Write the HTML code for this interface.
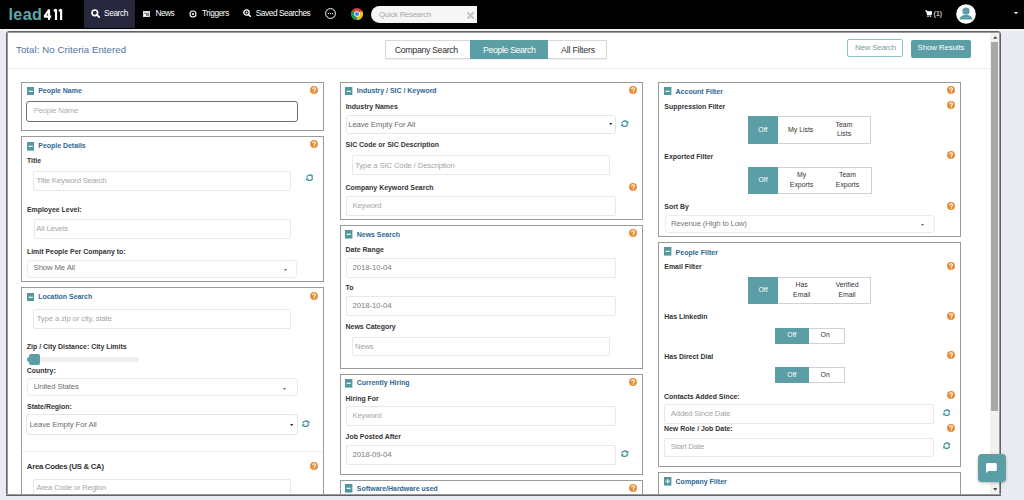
<!DOCTYPE html>
<html><head><meta charset="utf-8"><style>
html,body{margin:0;padding:0;}
body{width:1024px;height:500px;overflow:hidden;position:relative;background:#e8ebf0;font-family:"Liberation Sans", sans-serif;}
</style></head><body>
<div style="position:absolute;left:0.00px;top:0.00px;width:1024.00px;height:28.50px;background:#000;"></div>
<div style="position:absolute;left:0.00px;top:28.50px;width:1024.00px;height:2.50px;background:#f3f4f6;"></div>
<div style="position:absolute;left:8.40px;top:5.99px;font-size:16.2px;line-height:16.2px;color:#5aa9ad;font-weight:bold;white-space:nowrap;letter-spacing:0.4px">lead</div>
<svg style="position:absolute;left:40.00px;top:6.00px" width="26" height="16" viewBox="0 0 26 16"><g fill="none" stroke="#fff" stroke-width="2.2" stroke-linejoin="bevel"><path d="M8.9 4.0 L4.4 10.6 H11.2"/><path d="M9.0 3.4 V13.9"/><path d="M13.8 5.0 L16.0 3.6 V13.9"/><path d="M18.9 5.0 L21.1 3.6 V13.9"/></g></svg>
<div style="position:absolute;left:84.00px;top:0.00px;width:51.20px;height:28.00px;background:#26263c;"></div>
<svg style="position:absolute;left:91.00px;top:9.00px" width="9" height="9" viewBox="0 0 9 9"><circle cx="3.8" cy="3.8" r="2.8" fill="none" stroke="#fff" stroke-width="1.6"/><line x1="5.9" y1="5.9" x2="8.2" y2="8.2" stroke="#fff" stroke-width="1.8" stroke-linecap="round"/></svg>
<div style="position:absolute;left:104.00px;top:9.47px;font-size:8.3px;line-height:8.3px;color:#fff;white-space:nowrap;letter-spacing:-0.383px;">Search</div>
<svg style="position:absolute;left:143.00px;top:10.50px" width="7" height="6" viewBox="0 0 7 6"><rect x="0" y="0" width="7" height="6" fill="#ddd"/><rect x="1" y="2" width="5" height="3" fill="#888"/><rect x="1" y="3" width="2" height="2" fill="#fff"/></svg>
<div style="position:absolute;left:155.50px;top:9.47px;font-size:8.3px;line-height:8.3px;color:#fff;white-space:nowrap;letter-spacing:-0.563px;">News</div>
<svg style="position:absolute;left:189.00px;top:10.00px" width="8" height="8" viewBox="0 0 8 8"><circle cx="4" cy="4" r="3" fill="none" stroke="#fff" stroke-width="1.1"/><circle cx="4" cy="4" r="1.1" fill="#fff"/></svg>
<div style="position:absolute;left:202.00px;top:9.47px;font-size:8.3px;line-height:8.3px;color:#fff;white-space:nowrap;letter-spacing:-0.390px;">Triggers</div>
<svg style="position:absolute;left:243.00px;top:9.30px" width="8" height="8" viewBox="0 0 8 8"><circle cx="3.5" cy="3.5" r="2.7" fill="none" stroke="#fff" stroke-width="1.3"/><circle cx="3.5" cy="3.5" r="1" fill="#fff"/><line x1="5.5" y1="5.5" x2="7.5" y2="7.5" stroke="#fff" stroke-width="1.5" stroke-linecap="round"/></svg>
<div style="position:absolute;left:255.80px;top:9.47px;font-size:8.3px;line-height:8.3px;color:#fff;white-space:nowrap;letter-spacing:-0.456px;">Saved Searches</div>
<svg style="position:absolute;left:324.90px;top:8.20px" width="11" height="11" viewBox="0 0 11 11"><circle cx="5.5" cy="5.5" r="4.9" fill="none" stroke="#fff" stroke-width="1"/><circle cx="3.4" cy="5.6" r="0.7" fill="#fff"/><circle cx="5.5" cy="5.6" r="0.7" fill="#fff"/><circle cx="7.6" cy="5.6" r="0.7" fill="#fff"/></svg>
<svg style="position:absolute;left:350.80px;top:7.90px" width="12" height="12" viewBox="0 0 12 12"><circle cx="6" cy="6" r="6" fill="#db4437"/><path d="M6 6 L0.8 3 A6 6 0 0 0 6 12 Z" fill="#0f9d58"/><path d="M6 6 L11.2 3 A6 6 0 0 1 6 12 Z" fill="#f4c20d"/><circle cx="6" cy="6" r="2.8" fill="#fff"/><circle cx="6" cy="6" r="2.1" fill="#4285f4"/></svg>
<div style="position:absolute;left:370.60px;top:6.00px;width:106.00px;height:17.00px;background:#f6f6f6;border-radius:8.5px 0 0 8.5px;"></div>
<div style="position:absolute;left:379.00px;top:10.60px;font-size:7.8px;line-height:7.8px;color:#a9a9b0;white-space:nowrap;letter-spacing:-0.244px;">Quick Research</div>
<svg style="position:absolute;left:467.00px;top:11.70px" width="7" height="7" viewBox="0 0 7 7"><path d="M1 1 L6 6 M6 1 L1 6" stroke="#c4c4c4" stroke-width="1.8" stroke-linecap="round"/></svg>
<svg style="position:absolute;left:924.50px;top:10.00px" width="7" height="7" viewBox="0 0 7 7"><path d="M0.3 0.8 H1.6 L2.6 4.6 H6 L6.8 1.8 H2" fill="none" stroke="#fff" stroke-width="1.2"/><path d="M1.8 1.8 H6.6 L5.9 4.3 H2.5 Z" fill="#fff"/><circle cx="3" cy="6.2" r="0.8" fill="#fff"/><circle cx="5.5" cy="6.2" r="0.8" fill="#fff"/></svg>
<div style="position:absolute;left:933.60px;top:10.37px;font-size:7.6px;line-height:7.6px;color:#fff;white-space:nowrap;letter-spacing:-0.428px;">(1)</div>
<svg style="position:absolute;left:956.30px;top:4.00px" width="20" height="20" viewBox="0 0 20 20"><circle cx="10" cy="10" r="9.8" fill="#fff"/><circle cx="10" cy="7.2" r="3.6" fill="#5b9ea6"/><path d="M3.6 15.6 C3.8 12.2 6.3 11 10 11 C13.7 11 16.2 12.2 16.4 15.6 Z" fill="#5b9ea6"/></svg>
<svg style="position:absolute;left:1013.80px;top:12.40px" width="4" height="2.5" viewBox="0 0 4 2.5"><path d="M0 0 H4 L2 2.2 Z" fill="#fff"/></svg>
<div style="position:absolute;left:6.00px;top:31.00px;width:995.00px;height:464.60px;background:#fff;border:1px solid #636363;box-shadow:inset 0 0 0 1px #9a9a9a;border-radius:3px;box-sizing:border-box;"></div>
<div style="position:absolute;left:990.40px;top:33.00px;width:8.60px;height:460.60px;background:#f1f1f1;"></div>
<svg style="position:absolute;left:992.70px;top:36.20px" width="4.5" height="3" viewBox="0 0 4.5 3"><path d="M0 2.8 L2.25 0 L4.5 2.8 Z" fill="#505050"/></svg>
<div style="position:absolute;left:991.20px;top:42.00px;width:6.80px;height:368.80px;background:#a8a8a8;"></div>
<svg style="position:absolute;left:992.70px;top:488.00px" width="4.5" height="3" viewBox="0 0 4.5 3"><path d="M0 0 L2.25 2.8 L4.5 0 Z" fill="#505050"/></svg>
<div style="position:absolute;left:16.00px;top:44.67px;font-size:9.6px;line-height:9.6px;color:#4d72a0;white-space:nowrap;letter-spacing:0.095px;">Total: No Criteria Entered</div>
<div style="position:absolute;left:385.20px;top:40.20px;width:221.40px;height:18.80px;border:1px solid #d9d9d9;box-sizing:border-box;background:#fff;box-shadow:0 1px 1px rgba(0,0,0,0.06);"></div>
<div style="position:absolute;left:470.20px;top:40.20px;width:77.80px;height:18.80px;background:#5b9ea6;"></div>
<div style="position:absolute;left:394.80px;top:46.07px;font-size:8.9px;line-height:8.9px;color:#333;white-space:nowrap;letter-spacing:-0.397px;">Company Search</div>
<div style="position:absolute;left:483.10px;top:46.07px;font-size:8.9px;line-height:8.9px;color:#fff;white-space:nowrap;letter-spacing:-0.439px;">People Search</div>
<div style="position:absolute;left:561.00px;top:46.07px;font-size:8.9px;line-height:8.9px;color:#333;white-space:nowrap;letter-spacing:-0.228px;">All Filters</div>
<div style="position:absolute;left:847.10px;top:39.30px;width:55.80px;height:18.20px;border:1px solid #8ec3c7;border-radius:2px;box-sizing:border-box;"></div>
<div style="position:absolute;left:855.00px;top:44.41px;font-size:7.9px;line-height:7.9px;color:#7a9ea2;white-space:nowrap;letter-spacing:-0.202px;">New Search</div>
<div style="position:absolute;left:910.70px;top:39.50px;width:60.80px;height:18.00px;background:#5b9ea6;border-radius:2px;"></div>
<div style="position:absolute;left:917.50px;top:44.41px;font-size:7.9px;line-height:7.9px;color:#fff;white-space:nowrap;letter-spacing:-0.117px;">Show Results</div>
<div style="position:absolute;left:8.00px;top:68.00px;width:982.40px;height:1.00px;background:#f0f0f0;"></div>
<div style="position:absolute;left:21.00px;top:82.00px;width:303.20px;height:49.20px;border:1px solid #9a9a9a;box-sizing:border-box;"></div>
<svg style="position:absolute;left:26.80px;top:86.80px" width="7.4" height="8.6" viewBox="0 0 7.4 8.6"><rect width="7.4" height="8.6" fill="#52999f"/><rect x="1.6" y="3.7" width="4.2" height="1.3" fill="#e9f3f4"/></svg>
<div style="position:absolute;left:38.20px;top:88.12px;font-size:6.95px;line-height:6.95px;color:#2f6792;font-weight:bold;white-space:nowrap;">People Name</div>
<svg style="position:absolute;left:309.70px;top:85.80px" width="8" height="8" viewBox="0 0 16 16"><circle cx="8" cy="8" r="7.9" fill="#e58e38"/><path d="M5.4 6.3 C5.4 4.5 6.6 3.4 8.2 3.4 C9.8 3.4 10.9 4.4 10.9 5.9 C10.9 7.7 8.7 7.9 8.7 9.9" fill="none" stroke="#fff" stroke-width="2.2"/><rect x="7.5" y="11" width="2.3" height="2.2" fill="#fff"/></svg>
<div style="position:absolute;left:26.40px;top:101.00px;width:271.40px;height:21.00px;border:1px solid #6e6e6e;border-radius:3px;box-sizing:border-box;"></div>
<div style="position:absolute;left:33.80px;top:107.30px;font-size:7.8px;line-height:7.8px;color:#b0b0b0;white-space:nowrap;letter-spacing:-0.275px;">People Name</div>
<div style="position:absolute;left:21.00px;top:136.40px;width:303.20px;height:145.60px;border:1px solid #9a9a9a;box-sizing:border-box;"></div>
<svg style="position:absolute;left:26.80px;top:142.00px" width="7.4" height="8.6" viewBox="0 0 7.4 8.6"><rect width="7.4" height="8.6" fill="#52999f"/><rect x="1.6" y="3.7" width="4.2" height="1.3" fill="#e9f3f4"/></svg>
<div style="position:absolute;left:38.30px;top:143.22px;font-size:6.95px;line-height:6.95px;color:#2f6792;font-weight:bold;white-space:nowrap;">People Details</div>
<svg style="position:absolute;left:309.70px;top:140.30px" width="8" height="8" viewBox="0 0 16 16"><circle cx="8" cy="8" r="7.9" fill="#e58e38"/><path d="M5.4 6.3 C5.4 4.5 6.6 3.4 8.2 3.4 C9.8 3.4 10.9 4.4 10.9 5.9 C10.9 7.7 8.7 7.9 8.7 9.9" fill="none" stroke="#fff" stroke-width="2.2"/><rect x="7.5" y="11" width="2.3" height="2.2" fill="#fff"/></svg>
<div style="position:absolute;left:27.00px;top:158.02px;font-size:6.95px;line-height:6.95px;color:#333;font-weight:bold;white-space:nowrap;">Title</div>
<div style="position:absolute;left:33.30px;top:171.20px;width:257.60px;height:19.40px;border:1px solid #e8e8e8;border-radius:2px;box-sizing:border-box;"></div>
<div style="position:absolute;left:36.40px;top:177.20px;font-size:7.8px;line-height:7.8px;color:#a6a6a6;white-space:nowrap;letter-spacing:-0.189px;">Title Keyword Search</div>
<svg style="position:absolute;left:305.75px;top:173.85px" width="7.5" height="7.5" viewBox="0 0 16 16"><path d="M1.8 7.0 A6.4 5.6 0 0 1 13.4 4.6" fill="none" stroke="#3b929e" stroke-width="2.8"/><path d="M15.8 1.4 L15.8 7.2 L10.0 7.2 Z" fill="#3b929e"/><path d="M14.2 9.0 A6.4 5.6 0 0 1 2.6 11.4" fill="none" stroke="#3b929e" stroke-width="2.8"/><path d="M0.2 14.6 L0.2 8.8 L6.0 8.8 Z" fill="#3b929e"/></svg>
<div style="position:absolute;left:26.90px;top:206.62px;font-size:6.95px;line-height:6.95px;color:#333;font-weight:bold;white-space:nowrap;">Employee Level:</div>
<div style="position:absolute;left:33.60px;top:219.30px;width:257.30px;height:19.70px;border:1px solid #e8e8e8;border-radius:2px;box-sizing:border-box;"></div>
<div style="position:absolute;left:36.30px;top:225.40px;font-size:7.8px;line-height:7.8px;color:#a6a6a6;white-space:nowrap;letter-spacing:-0.171px;">All Levels</div>
<div style="position:absolute;left:26.90px;top:249.02px;font-size:6.95px;line-height:6.95px;color:#333;font-weight:bold;white-space:nowrap;">Limit People Per Company to:</div>
<div style="position:absolute;left:26.90px;top:259.50px;width:270.10px;height:18.10px;border:1px solid #ececec;border-radius:3px;box-sizing:border-box;"></div>
<div style="position:absolute;left:33.60px;top:264.40px;font-size:7.8px;line-height:7.8px;color:#6e6e6e;white-space:nowrap;letter-spacing:-0.150px;">Show Me All</div>
<svg style="position:absolute;left:283.70px;top:269.20px" width="3" height="2.2" viewBox="0 0 3 2.2"><path d="M0 0 H3 L1.5 2.1 Z" fill="#666"/></svg>
<div style="position:absolute;left:21.00px;top:287.40px;width:303.20px;height:233.20px;border:1px solid #9a9a9a;box-sizing:border-box;"></div>
<svg style="position:absolute;left:26.80px;top:292.60px" width="7.4" height="8.6" viewBox="0 0 7.4 8.6"><rect width="7.4" height="8.6" fill="#52999f"/><rect x="1.6" y="3.7" width="4.2" height="1.3" fill="#e9f3f4"/></svg>
<div style="position:absolute;left:38.20px;top:293.82px;font-size:6.95px;line-height:6.95px;color:#2f6792;font-weight:bold;white-space:nowrap;">Location Search</div>
<svg style="position:absolute;left:309.70px;top:291.50px" width="8" height="8" viewBox="0 0 16 16"><circle cx="8" cy="8" r="7.9" fill="#e58e38"/><path d="M5.4 6.3 C5.4 4.5 6.6 3.4 8.2 3.4 C9.8 3.4 10.9 4.4 10.9 5.9 C10.9 7.7 8.7 7.9 8.7 9.9" fill="none" stroke="#fff" stroke-width="2.2"/><rect x="7.5" y="11" width="2.3" height="2.2" fill="#fff"/></svg>
<div style="position:absolute;left:33.30px;top:309.30px;width:257.80px;height:19.80px;border:1px solid #e8e8e8;border-radius:2px;box-sizing:border-box;"></div>
<div style="position:absolute;left:36.70px;top:315.30px;font-size:7.8px;line-height:7.8px;color:#a6a6a6;white-space:nowrap;letter-spacing:-0.162px;">Type a zip or city, state</div>
<div style="position:absolute;left:26.80px;top:344.22px;font-size:6.95px;line-height:6.95px;color:#333;font-weight:bold;white-space:nowrap;">Zip / City Distance: City Limits</div>
<div style="position:absolute;left:26.80px;top:357.10px;width:112.20px;height:5.20px;background:#efefef;border-radius:2.5px;"></div>
<div style="position:absolute;left:26.80px;top:357.10px;width:3.20px;height:5.20px;background:#5b9ea6;border-radius:2.5px 0 0 2.5px;"></div>
<div style="position:absolute;left:28.50px;top:354.40px;width:11.30px;height:10.70px;background:#5b9ea6;border-radius:2px;"></div>
<div style="position:absolute;left:26.80px;top:367.92px;font-size:6.95px;line-height:6.95px;color:#333;font-weight:bold;white-space:nowrap;">Country:</div>
<div style="position:absolute;left:27.10px;top:378.30px;width:270.50px;height:17.90px;border:1px solid #ececec;border-radius:3px;box-sizing:border-box;"></div>
<div style="position:absolute;left:33.70px;top:383.40px;font-size:7.8px;line-height:7.8px;color:#6e6e6e;white-space:nowrap;letter-spacing:-0.139px;">United States</div>
<svg style="position:absolute;left:283.30px;top:387.50px" width="3" height="2.2" viewBox="0 0 3 2.2"><path d="M0 0 H3 L1.5 2.1 Z" fill="#666"/></svg>
<div style="position:absolute;left:27.00px;top:404.22px;font-size:6.95px;line-height:6.95px;color:#333;font-weight:bold;white-space:nowrap;">State/Region:</div>
<div style="position:absolute;left:26.40px;top:414.40px;width:271.20px;height:20.60px;border:1px solid #e6e6e6;border-radius:3px;box-sizing:border-box;"></div>
<div style="position:absolute;left:29.60px;top:421.20px;font-size:7.8px;line-height:7.8px;color:#6e6e6e;white-space:nowrap;letter-spacing:-0.141px;">Leave Empty For All</div>
<svg style="position:absolute;left:289.90px;top:423.60px" width="3.4" height="2.2" viewBox="0 0 3.4 2.2"><path d="M0 0 H3.4 L1.7 2.1 Z" fill="#333"/></svg>
<svg style="position:absolute;left:302.25px;top:419.75px" width="7.5" height="7.5" viewBox="0 0 16 16"><path d="M1.8 7.0 A6.4 5.6 0 0 1 13.4 4.6" fill="none" stroke="#3b929e" stroke-width="2.8"/><path d="M15.8 1.4 L15.8 7.2 L10.0 7.2 Z" fill="#3b929e"/><path d="M14.2 9.0 A6.4 5.6 0 0 1 2.6 11.4" fill="none" stroke="#3b929e" stroke-width="2.8"/><path d="M0.2 14.6 L0.2 8.8 L6.0 8.8 Z" fill="#3b929e"/></svg>
<div style="position:absolute;left:22.00px;top:451.00px;width:300.60px;height:1.00px;background:#eeeeee;"></div>
<div style="position:absolute;left:26.80px;top:463.20px;font-size:7.8px;line-height:7.8px;color:#333;font-weight:bold;white-space:nowrap;letter-spacing:-0.292px;">Area Codes (US &amp; CA)</div>
<svg style="position:absolute;left:309.50px;top:462.20px" width="8" height="8" viewBox="0 0 16 16"><circle cx="8" cy="8" r="7.9" fill="#e58e38"/><path d="M5.4 6.3 C5.4 4.5 6.6 3.4 8.2 3.4 C9.8 3.4 10.9 4.4 10.9 5.9 C10.9 7.7 8.7 7.9 8.7 9.9" fill="none" stroke="#fff" stroke-width="2.2"/><rect x="7.5" y="11" width="2.3" height="2.2" fill="#fff"/></svg>
<div style="position:absolute;left:33.30px;top:478.50px;width:257.80px;height:22.10px;border:1px solid #e8e8e8;border-radius:2px;box-sizing:border-box;"></div>
<div style="position:absolute;left:36.40px;top:484.20px;font-size:7.8px;line-height:7.8px;color:#a6a6a6;white-space:nowrap;letter-spacing:-0.198px;">Area Code or Region</div>
<div style="position:absolute;left:339.60px;top:82.00px;width:303.00px;height:138.20px;border:1px solid #9a9a9a;box-sizing:border-box;"></div>
<svg style="position:absolute;left:345.40px;top:86.80px" width="7.4" height="8.6" viewBox="0 0 7.4 8.6"><rect width="7.4" height="8.6" fill="#52999f"/><rect x="1.6" y="3.7" width="4.2" height="1.3" fill="#e9f3f4"/></svg>
<div style="position:absolute;left:356.80px;top:88.32px;font-size:6.95px;line-height:6.95px;color:#2f6792;font-weight:bold;white-space:nowrap;">Industry / SIC / Keyword</div>
<svg style="position:absolute;left:628.50px;top:85.80px" width="8" height="8" viewBox="0 0 16 16"><circle cx="8" cy="8" r="7.9" fill="#e58e38"/><path d="M5.4 6.3 C5.4 4.5 6.6 3.4 8.2 3.4 C9.8 3.4 10.9 4.4 10.9 5.9 C10.9 7.7 8.7 7.9 8.7 9.9" fill="none" stroke="#fff" stroke-width="2.2"/><rect x="7.5" y="11" width="2.3" height="2.2" fill="#fff"/></svg>
<div style="position:absolute;left:345.70px;top:104.02px;font-size:6.95px;line-height:6.95px;color:#333;font-weight:bold;white-space:nowrap;">Industry Names</div>
<div style="position:absolute;left:345.50px;top:114.80px;width:270.40px;height:19.60px;border:1px solid #e6e6e6;border-radius:3px;box-sizing:border-box;"></div>
<div style="position:absolute;left:348.20px;top:120.80px;font-size:7.8px;line-height:7.8px;color:#6e6e6e;white-space:nowrap;letter-spacing:-0.141px;">Leave Empty For All</div>
<svg style="position:absolute;left:608.90px;top:123.40px" width="3.4" height="2.2" viewBox="0 0 3.4 2.2"><path d="M0 0 H3.4 L1.7 2.1 Z" fill="#333"/></svg>
<svg style="position:absolute;left:621.15px;top:119.65px" width="7.5" height="7.5" viewBox="0 0 16 16"><path d="M1.8 7.0 A6.4 5.6 0 0 1 13.4 4.6" fill="none" stroke="#3b929e" stroke-width="2.8"/><path d="M15.8 1.4 L15.8 7.2 L10.0 7.2 Z" fill="#3b929e"/><path d="M14.2 9.0 A6.4 5.6 0 0 1 2.6 11.4" fill="none" stroke="#3b929e" stroke-width="2.8"/><path d="M0.2 14.6 L0.2 8.8 L6.0 8.8 Z" fill="#3b929e"/></svg>
<div style="position:absolute;left:345.60px;top:142.32px;font-size:6.95px;line-height:6.95px;color:#333;font-weight:bold;white-space:nowrap;">SIC Code or SIC Description</div>
<div style="position:absolute;left:352.00px;top:155.00px;width:258.30px;height:19.90px;border:1px solid #e8e8e8;border-radius:2px;box-sizing:border-box;"></div>
<div style="position:absolute;left:355.20px;top:161.50px;font-size:7.8px;line-height:7.8px;color:#a6a6a6;white-space:nowrap;letter-spacing:-0.186px;">Type a SIC Code / Description</div>
<div style="position:absolute;left:345.60px;top:185.22px;font-size:6.95px;line-height:6.95px;color:#333;font-weight:bold;white-space:nowrap;">Company Keyword Search</div>
<svg style="position:absolute;left:628.50px;top:182.60px" width="8" height="8" viewBox="0 0 16 16"><circle cx="8" cy="8" r="7.9" fill="#e58e38"/><path d="M5.4 6.3 C5.4 4.5 6.6 3.4 8.2 3.4 C9.8 3.4 10.9 4.4 10.9 5.9 C10.9 7.7 8.7 7.9 8.7 9.9" fill="none" stroke="#fff" stroke-width="2.2"/><rect x="7.5" y="11" width="2.3" height="2.2" fill="#fff"/></svg>
<div style="position:absolute;left:345.90px;top:195.50px;width:270.00px;height:20.10px;border:1px solid #e8e8e8;border-radius:2px;box-sizing:border-box;"></div>
<div style="position:absolute;left:352.50px;top:201.50px;font-size:7.8px;line-height:7.8px;color:#a6a6a6;white-space:nowrap;letter-spacing:-0.222px;">Keyword</div>
<div style="position:absolute;left:339.60px;top:225.30px;width:303.00px;height:143.70px;border:1px solid #9a9a9a;box-sizing:border-box;"></div>
<svg style="position:absolute;left:345.40px;top:230.00px" width="7.4" height="8.6" viewBox="0 0 7.4 8.6"><rect width="7.4" height="8.6" fill="#52999f"/><rect x="1.6" y="3.7" width="4.2" height="1.3" fill="#e9f3f4"/></svg>
<div style="position:absolute;left:356.80px;top:231.62px;font-size:6.95px;line-height:6.95px;color:#2f6792;font-weight:bold;white-space:nowrap;">News Search</div>
<svg style="position:absolute;left:628.50px;top:229.30px" width="8" height="8" viewBox="0 0 16 16"><circle cx="8" cy="8" r="7.9" fill="#e58e38"/><path d="M5.4 6.3 C5.4 4.5 6.6 3.4 8.2 3.4 C9.8 3.4 10.9 4.4 10.9 5.9 C10.9 7.7 8.7 7.9 8.7 9.9" fill="none" stroke="#fff" stroke-width="2.2"/><rect x="7.5" y="11" width="2.3" height="2.2" fill="#fff"/></svg>
<div style="position:absolute;left:345.60px;top:247.32px;font-size:6.95px;line-height:6.95px;color:#333;font-weight:bold;white-space:nowrap;">Date Range</div>
<div style="position:absolute;left:345.60px;top:257.50px;width:270.30px;height:20.30px;border:1px solid #e8e8e8;border-radius:2px;box-sizing:border-box;"></div>
<div style="position:absolute;left:352.50px;top:263.90px;font-size:7.8px;line-height:7.8px;color:#7c7c7c;white-space:nowrap;letter-spacing:-0.102px;">2018-10-04</div>
<div style="position:absolute;left:345.60px;top:285.42px;font-size:6.95px;line-height:6.95px;color:#333;font-weight:bold;white-space:nowrap;">To</div>
<div style="position:absolute;left:345.60px;top:295.90px;width:270.30px;height:20.00px;border:1px solid #e8e8e8;border-radius:2px;box-sizing:border-box;"></div>
<div style="position:absolute;left:352.50px;top:302.30px;font-size:7.8px;line-height:7.8px;color:#7c7c7c;white-space:nowrap;letter-spacing:-0.102px;">2018-10-04</div>
<div style="position:absolute;left:345.60px;top:324.12px;font-size:6.95px;line-height:6.95px;color:#333;font-weight:bold;white-space:nowrap;">News Category</div>
<div style="position:absolute;left:351.90px;top:337.20px;width:258.40px;height:18.70px;border:1px solid #e8e8e8;border-radius:2px;box-sizing:border-box;"></div>
<div style="position:absolute;left:355.00px;top:343.00px;font-size:7.8px;line-height:7.8px;color:#a6a6a6;white-space:nowrap;letter-spacing:-0.250px;">News</div>
<div style="position:absolute;left:339.60px;top:374.30px;width:303.00px;height:100.50px;border:1px solid #9a9a9a;box-sizing:border-box;"></div>
<svg style="position:absolute;left:345.40px;top:379.00px" width="7.4" height="8.6" viewBox="0 0 7.4 8.6"><rect width="7.4" height="8.6" fill="#52999f"/><rect x="1.6" y="3.7" width="4.2" height="1.3" fill="#e9f3f4"/></svg>
<div style="position:absolute;left:356.80px;top:380.42px;font-size:6.95px;line-height:6.95px;color:#2f6792;font-weight:bold;white-space:nowrap;">Currently Hiring</div>
<svg style="position:absolute;left:628.50px;top:378.00px" width="8" height="8" viewBox="0 0 16 16"><circle cx="8" cy="8" r="7.9" fill="#e58e38"/><path d="M5.4 6.3 C5.4 4.5 6.6 3.4 8.2 3.4 C9.8 3.4 10.9 4.4 10.9 5.9 C10.9 7.7 8.7 7.9 8.7 9.9" fill="none" stroke="#fff" stroke-width="2.2"/><rect x="7.5" y="11" width="2.3" height="2.2" fill="#fff"/></svg>
<div style="position:absolute;left:345.60px;top:395.62px;font-size:6.95px;line-height:6.95px;color:#333;font-weight:bold;white-space:nowrap;">Hiring For</div>
<div style="position:absolute;left:345.60px;top:406.30px;width:270.30px;height:19.60px;border:1px solid #e8e8e8;border-radius:2px;box-sizing:border-box;"></div>
<div style="position:absolute;left:352.50px;top:412.30px;font-size:7.8px;line-height:7.8px;color:#a6a6a6;white-space:nowrap;letter-spacing:-0.222px;">Keyword</div>
<div style="position:absolute;left:345.60px;top:434.12px;font-size:6.95px;line-height:6.95px;color:#333;font-weight:bold;white-space:nowrap;">Job Posted After</div>
<div style="position:absolute;left:345.60px;top:444.70px;width:270.30px;height:20.30px;border:1px solid #e8e8e8;border-radius:2px;box-sizing:border-box;"></div>
<div style="position:absolute;left:352.50px;top:450.90px;font-size:7.8px;line-height:7.8px;color:#7c7c7c;white-space:nowrap;letter-spacing:-0.102px;">2018-09-04</div>
<svg style="position:absolute;left:621.25px;top:449.75px" width="7.5" height="7.5" viewBox="0 0 16 16"><path d="M1.8 7.0 A6.4 5.6 0 0 1 13.4 4.6" fill="none" stroke="#3b929e" stroke-width="2.8"/><path d="M15.8 1.4 L15.8 7.2 L10.0 7.2 Z" fill="#3b929e"/><path d="M14.2 9.0 A6.4 5.6 0 0 1 2.6 11.4" fill="none" stroke="#3b929e" stroke-width="2.8"/><path d="M0.2 14.6 L0.2 8.8 L6.0 8.8 Z" fill="#3b929e"/></svg>
<div style="position:absolute;left:339.60px;top:479.80px;width:303.00px;height:40.80px;border:1px solid #9a9a9a;box-sizing:border-box;"></div>
<svg style="position:absolute;left:345.40px;top:484.40px" width="7.4" height="8.6" viewBox="0 0 7.4 8.6"><rect width="7.4" height="8.6" fill="#52999f"/><rect x="1.6" y="3.7" width="4.2" height="1.3" fill="#e9f3f4"/></svg>
<div style="position:absolute;left:356.80px;top:486.02px;font-size:6.95px;line-height:6.95px;color:#2f6792;font-weight:bold;white-space:nowrap;">Software/Hardware used</div>
<svg style="position:absolute;left:628.50px;top:483.50px" width="8" height="8" viewBox="0 0 16 16"><circle cx="8" cy="8" r="7.9" fill="#e58e38"/><path d="M5.4 6.3 C5.4 4.5 6.6 3.4 8.2 3.4 C9.8 3.4 10.9 4.4 10.9 5.9 C10.9 7.7 8.7 7.9 8.7 9.9" fill="none" stroke="#fff" stroke-width="2.2"/><rect x="7.5" y="11" width="2.3" height="2.2" fill="#fff"/></svg>
<div style="position:absolute;left:658.40px;top:82.00px;width:303.00px;height:155.00px;border:1px solid #9a9a9a;box-sizing:border-box;"></div>
<svg style="position:absolute;left:664.20px;top:86.80px" width="7.4" height="8.6" viewBox="0 0 7.4 8.6"><rect width="7.4" height="8.6" fill="#52999f"/><rect x="1.6" y="3.7" width="4.2" height="1.3" fill="#e9f3f4"/></svg>
<div style="position:absolute;left:675.50px;top:88.23px;font-size:7.05px;line-height:7.05px;color:#2f6792;font-weight:bold;white-space:nowrap;">Account Filter</div>
<svg style="position:absolute;left:947.10px;top:86.40px" width="8" height="8" viewBox="0 0 16 16"><circle cx="8" cy="8" r="7.9" fill="#e58e38"/><path d="M5.4 6.3 C5.4 4.5 6.6 3.4 8.2 3.4 C9.8 3.4 10.9 4.4 10.9 5.9 C10.9 7.7 8.7 7.9 8.7 9.9" fill="none" stroke="#fff" stroke-width="2.2"/><rect x="7.5" y="11" width="2.3" height="2.2" fill="#fff"/></svg>
<div style="position:absolute;left:664.30px;top:103.82px;font-size:6.95px;line-height:6.95px;color:#333;font-weight:bold;white-space:nowrap;">Suppression Filter</div>
<svg style="position:absolute;left:947.10px;top:101.00px" width="8" height="8" viewBox="0 0 16 16"><circle cx="8" cy="8" r="7.9" fill="#e58e38"/><path d="M5.4 6.3 C5.4 4.5 6.6 3.4 8.2 3.4 C9.8 3.4 10.9 4.4 10.9 5.9 C10.9 7.7 8.7 7.9 8.7 9.9" fill="none" stroke="#fff" stroke-width="2.2"/><rect x="7.5" y="11" width="2.3" height="2.2" fill="#fff"/></svg>
<div style="position:absolute;left:748.10px;top:116.30px;width:123.10px;height:27.40px;border:1px solid #d2d2d2;box-sizing:border-box;"></div>
<div style="position:absolute;left:748.10px;top:116.30px;width:29.60px;height:27.40px;background:#5b9ea6;"></div>
<div style="position:absolute;left:662.90px;width:200px;text-align:center;top:126.76px;font-size:6.9px;line-height:6.9px;color:#fff;white-space:nowrap;">Off</div>
<div style="position:absolute;left:700.70px;width:200px;text-align:center;top:126.76px;font-size:6.9px;line-height:6.9px;color:#333;white-space:nowrap;">My Lists</div>
<div style="position:absolute;left:744.00px;width:200px;text-align:center;top:121.91px;font-size:6.9px;line-height:6.9px;color:#333;white-space:nowrap;">Team</div>
<div style="position:absolute;left:744.00px;width:200px;text-align:center;top:131.41px;font-size:6.9px;line-height:6.9px;color:#333;white-space:nowrap;">Lists</div>
<div style="position:absolute;left:664.30px;top:154.12px;font-size:6.95px;line-height:6.95px;color:#333;font-weight:bold;white-space:nowrap;">Exported Filter</div>
<svg style="position:absolute;left:947.10px;top:151.30px" width="8" height="8" viewBox="0 0 16 16"><circle cx="8" cy="8" r="7.9" fill="#e58e38"/><path d="M5.4 6.3 C5.4 4.5 6.6 3.4 8.2 3.4 C9.8 3.4 10.9 4.4 10.9 5.9 C10.9 7.7 8.7 7.9 8.7 9.9" fill="none" stroke="#fff" stroke-width="2.2"/><rect x="7.5" y="11" width="2.3" height="2.2" fill="#fff"/></svg>
<div style="position:absolute;left:748.20px;top:166.80px;width:123.40px;height:27.30px;border:1px solid #d2d2d2;box-sizing:border-box;"></div>
<div style="position:absolute;left:748.20px;top:166.80px;width:29.70px;height:27.30px;background:#5b9ea6;"></div>
<div style="position:absolute;left:663.05px;width:200px;text-align:center;top:177.21px;font-size:6.9px;line-height:6.9px;color:#fff;white-space:nowrap;">Off</div>
<div style="position:absolute;left:701.50px;width:200px;text-align:center;top:172.36px;font-size:6.9px;line-height:6.9px;color:#333;white-space:nowrap;">My</div>
<div style="position:absolute;left:701.50px;width:200px;text-align:center;top:181.86px;font-size:6.9px;line-height:6.9px;color:#333;white-space:nowrap;">Exports</div>
<div style="position:absolute;left:747.50px;width:200px;text-align:center;top:172.36px;font-size:6.9px;line-height:6.9px;color:#333;white-space:nowrap;">Team</div>
<div style="position:absolute;left:747.50px;width:200px;text-align:center;top:181.86px;font-size:6.9px;line-height:6.9px;color:#333;white-space:nowrap;">Exports</div>
<div style="position:absolute;left:664.30px;top:204.12px;font-size:6.95px;line-height:6.95px;color:#333;font-weight:bold;white-space:nowrap;">Sort By</div>
<svg style="position:absolute;left:947.10px;top:201.60px" width="8" height="8" viewBox="0 0 16 16"><circle cx="8" cy="8" r="7.9" fill="#e58e38"/><path d="M5.4 6.3 C5.4 4.5 6.6 3.4 8.2 3.4 C9.8 3.4 10.9 4.4 10.9 5.9 C10.9 7.7 8.7 7.9 8.7 9.9" fill="none" stroke="#fff" stroke-width="2.2"/><rect x="7.5" y="11" width="2.3" height="2.2" fill="#fff"/></svg>
<div style="position:absolute;left:664.80px;top:214.50px;width:269.80px;height:18.60px;border:1px solid #ececec;border-radius:3px;box-sizing:border-box;"></div>
<div style="position:absolute;left:671.00px;top:219.80px;font-size:7.8px;line-height:7.8px;color:#777;white-space:nowrap;letter-spacing:-0.195px;">Revenue (High to Low)</div>
<svg style="position:absolute;left:920.50px;top:223.70px" width="3" height="2.2" viewBox="0 0 3 2.2"><path d="M0 0 H3 L1.5 2.1 Z" fill="#666"/></svg>
<div style="position:absolute;left:658.40px;top:242.40px;width:303.00px;height:224.40px;border:1px solid #9a9a9a;box-sizing:border-box;"></div>
<svg style="position:absolute;left:664.20px;top:247.00px" width="7.4" height="8.6" viewBox="0 0 7.4 8.6"><rect width="7.4" height="8.6" fill="#52999f"/><rect x="1.6" y="3.7" width="4.2" height="1.3" fill="#e9f3f4"/></svg>
<div style="position:absolute;left:675.60px;top:248.73px;font-size:7.05px;line-height:7.05px;color:#2f6792;font-weight:bold;white-space:nowrap;">People Filter</div>
<div style="position:absolute;left:664.30px;top:264.12px;font-size:6.95px;line-height:6.95px;color:#333;font-weight:bold;white-space:nowrap;">Email Filter</div>
<svg style="position:absolute;left:947.10px;top:261.60px" width="8" height="8" viewBox="0 0 16 16"><circle cx="8" cy="8" r="7.9" fill="#e58e38"/><path d="M5.4 6.3 C5.4 4.5 6.6 3.4 8.2 3.4 C9.8 3.4 10.9 4.4 10.9 5.9 C10.9 7.7 8.7 7.9 8.7 9.9" fill="none" stroke="#fff" stroke-width="2.2"/><rect x="7.5" y="11" width="2.3" height="2.2" fill="#fff"/></svg>
<div style="position:absolute;left:748.40px;top:277.30px;width:123.00px;height:26.50px;border:1px solid #d2d2d2;box-sizing:border-box;"></div>
<div style="position:absolute;left:748.40px;top:277.30px;width:29.30px;height:26.50px;background:#5b9ea6;"></div>
<div style="position:absolute;left:663.05px;width:200px;text-align:center;top:287.31px;font-size:6.9px;line-height:6.9px;color:#fff;white-space:nowrap;">Off</div>
<div style="position:absolute;left:701.70px;width:200px;text-align:center;top:282.46px;font-size:6.9px;line-height:6.9px;color:#333;white-space:nowrap;">Has</div>
<div style="position:absolute;left:701.70px;width:200px;text-align:center;top:291.96px;font-size:6.9px;line-height:6.9px;color:#333;white-space:nowrap;">Email</div>
<div style="position:absolute;left:747.00px;width:200px;text-align:center;top:282.46px;font-size:6.9px;line-height:6.9px;color:#333;white-space:nowrap;">Verified</div>
<div style="position:absolute;left:747.00px;width:200px;text-align:center;top:291.96px;font-size:6.9px;line-height:6.9px;color:#333;white-space:nowrap;">Email</div>
<div style="position:absolute;left:664.30px;top:314.12px;font-size:6.95px;line-height:6.95px;color:#333;font-weight:bold;white-space:nowrap;">Has Linkedin</div>
<svg style="position:absolute;left:947.10px;top:311.60px" width="8" height="8" viewBox="0 0 16 16"><circle cx="8" cy="8" r="7.9" fill="#e58e38"/><path d="M5.4 6.3 C5.4 4.5 6.6 3.4 8.2 3.4 C9.8 3.4 10.9 4.4 10.9 5.9 C10.9 7.7 8.7 7.9 8.7 9.9" fill="none" stroke="#fff" stroke-width="2.2"/><rect x="7.5" y="11" width="2.3" height="2.2" fill="#fff"/></svg>
<div style="position:absolute;left:774.80px;top:327.60px;width:70.20px;height:16.20px;border:1px solid #d2d2d2;box-sizing:border-box;"></div>
<div style="position:absolute;left:774.80px;top:327.60px;width:34.10px;height:16.20px;background:#5b9ea6;"></div>
<div style="position:absolute;left:691.85px;width:200px;text-align:center;top:332.46px;font-size:6.9px;line-height:6.9px;color:#fff;white-space:nowrap;">Off</div>
<div style="position:absolute;left:725.15px;width:200px;text-align:center;top:332.46px;font-size:6.9px;line-height:6.9px;color:#333;white-space:nowrap;">On</div>
<div style="position:absolute;left:664.30px;top:353.82px;font-size:6.95px;line-height:6.95px;color:#333;font-weight:bold;white-space:nowrap;">Has Direct Dial</div>
<svg style="position:absolute;left:947.10px;top:351.00px" width="8" height="8" viewBox="0 0 16 16"><circle cx="8" cy="8" r="7.9" fill="#e58e38"/><path d="M5.4 6.3 C5.4 4.5 6.6 3.4 8.2 3.4 C9.8 3.4 10.9 4.4 10.9 5.9 C10.9 7.7 8.7 7.9 8.7 9.9" fill="none" stroke="#fff" stroke-width="2.2"/><rect x="7.5" y="11" width="2.3" height="2.2" fill="#fff"/></svg>
<div style="position:absolute;left:774.80px;top:367.20px;width:70.20px;height:16.20px;border:1px solid #d2d2d2;box-sizing:border-box;"></div>
<div style="position:absolute;left:774.80px;top:367.20px;width:34.10px;height:16.20px;background:#5b9ea6;"></div>
<div style="position:absolute;left:691.85px;width:200px;text-align:center;top:372.06px;font-size:6.9px;line-height:6.9px;color:#fff;white-space:nowrap;">Off</div>
<div style="position:absolute;left:725.15px;width:200px;text-align:center;top:372.06px;font-size:6.9px;line-height:6.9px;color:#333;white-space:nowrap;">On</div>
<div style="position:absolute;left:664.00px;top:393.82px;font-size:6.95px;line-height:6.95px;color:#333;font-weight:bold;white-space:nowrap;">Contacts Added Since:</div>
<svg style="position:absolute;left:947.10px;top:390.80px" width="8" height="8" viewBox="0 0 16 16"><circle cx="8" cy="8" r="7.9" fill="#e58e38"/><path d="M5.4 6.3 C5.4 4.5 6.6 3.4 8.2 3.4 C9.8 3.4 10.9 4.4 10.9 5.9 C10.9 7.7 8.7 7.9 8.7 9.9" fill="none" stroke="#fff" stroke-width="2.2"/><rect x="7.5" y="11" width="2.3" height="2.2" fill="#fff"/></svg>
<div style="position:absolute;left:664.00px;top:404.40px;width:270.20px;height:19.80px;border:1px solid #e8e8e8;border-radius:2px;box-sizing:border-box;"></div>
<div style="position:absolute;left:670.80px;top:410.30px;font-size:7.8px;line-height:7.8px;color:#a6a6a6;white-space:nowrap;letter-spacing:-0.202px;">Added Since Date</div>
<svg style="position:absolute;left:942.65px;top:408.95px" width="7.5" height="7.5" viewBox="0 0 16 16"><path d="M1.8 7.0 A6.4 5.6 0 0 1 13.4 4.6" fill="none" stroke="#3b929e" stroke-width="2.8"/><path d="M15.8 1.4 L15.8 7.2 L10.0 7.2 Z" fill="#3b929e"/><path d="M14.2 9.0 A6.4 5.6 0 0 1 2.6 11.4" fill="none" stroke="#3b929e" stroke-width="2.8"/><path d="M0.2 14.6 L0.2 8.8 L6.0 8.8 Z" fill="#3b929e"/></svg>
<div style="position:absolute;left:664.00px;top:426.32px;font-size:6.95px;line-height:6.95px;color:#333;font-weight:bold;white-space:nowrap;">New Role / Job Date:</div>
<svg style="position:absolute;left:947.10px;top:423.70px" width="8" height="8" viewBox="0 0 16 16"><circle cx="8" cy="8" r="7.9" fill="#e58e38"/><path d="M5.4 6.3 C5.4 4.5 6.6 3.4 8.2 3.4 C9.8 3.4 10.9 4.4 10.9 5.9 C10.9 7.7 8.7 7.9 8.7 9.9" fill="none" stroke="#fff" stroke-width="2.2"/><rect x="7.5" y="11" width="2.3" height="2.2" fill="#fff"/></svg>
<div style="position:absolute;left:664.00px;top:437.60px;width:270.20px;height:19.90px;border:1px solid #e8e8e8;border-radius:2px;box-sizing:border-box;"></div>
<div style="position:absolute;left:670.80px;top:443.20px;font-size:7.8px;line-height:7.8px;color:#a6a6a6;white-space:nowrap;letter-spacing:-0.180px;">Start Date</div>
<svg style="position:absolute;left:942.65px;top:442.15px" width="7.5" height="7.5" viewBox="0 0 16 16"><path d="M1.8 7.0 A6.4 5.6 0 0 1 13.4 4.6" fill="none" stroke="#3b929e" stroke-width="2.8"/><path d="M15.8 1.4 L15.8 7.2 L10.0 7.2 Z" fill="#3b929e"/><path d="M14.2 9.0 A6.4 5.6 0 0 1 2.6 11.4" fill="none" stroke="#3b929e" stroke-width="2.8"/><path d="M0.2 14.6 L0.2 8.8 L6.0 8.8 Z" fill="#3b929e"/></svg>
<div style="position:absolute;left:658.40px;top:472.40px;width:303.00px;height:48.20px;border:1px solid #9a9a9a;box-sizing:border-box;"></div>
<svg style="position:absolute;left:664.20px;top:477.20px" width="7.4" height="8.6" viewBox="0 0 7.4 8.6"><rect width="7.4" height="8.6" fill="#52999f"/><rect x="1.6" y="3.7" width="4.2" height="1.3" fill="#e9f3f4"/><rect x="3.05" y="2.2" width="1.3" height="4.2" fill="#e9f3f4"/></svg>
<div style="position:absolute;left:675.50px;top:478.23px;font-size:7.05px;line-height:7.05px;color:#2f6792;font-weight:bold;white-space:nowrap;">Company Filter</div>
<div style="position:absolute;left:6.00px;top:493.60px;width:995.00px;height:1.00px;background:#9a9a9a;"></div>
<div style="position:absolute;left:6.00px;top:494.60px;width:995.00px;height:1.00px;background:#636363;"></div>
<div style="position:absolute;left:0.00px;top:495.60px;width:1024.00px;height:4.40px;background:#e8ebf0;"></div>
<div style="position:absolute;left:8.00px;top:493.59px;width:0.00px;height:0.01px;"></div>
<div style="position:absolute;left:978.20px;top:454.20px;width:27.60px;height:27.80px;background:#5b9ea6;border-radius:4px;box-shadow:0 1px 3px rgba(0,0,0,0.25);"></div>
<svg style="position:absolute;left:986.40px;top:462.80px" width="11" height="10.2" viewBox="0 0 11 10.2"><path d="M0 1.5 A1.5 1.5 0 0 1 1.5 0 H9.3 A1.5 1.5 0 0 1 10.8 1.5 V6.5 A1.5 1.5 0 0 1 9.3 8 H2.4 L0 10 Z" fill="#fff"/></svg>
</body></html>
